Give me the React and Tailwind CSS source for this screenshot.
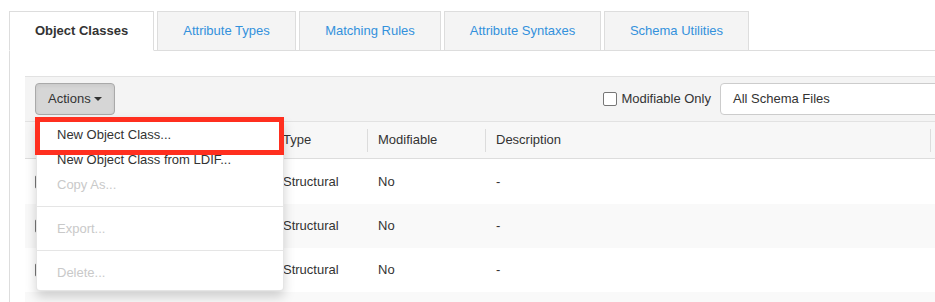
import React from "react";

const tabs = [
  { label: "Object Classes", w: "w-[145px]", active: true },
  { label: "Attribute Types", w: "w-[139px]" },
  { label: "Matching Rules", w: "w-[142px]" },
  { label: "Attribute Syntaxes", w: "w-[157px]" },
  { label: "Schema Utilities", w: "w-[145px]" },
];

const rows = [
  { bg: "bg-white", h: "h-[45px]", show: true },
  { bg: "bg-[#f9f9f9]", h: "h-[44px]", show: true },
  { bg: "bg-white", h: "h-[44px]", show: true },
  { bg: "bg-[#f9f9f9]", h: "h-[44px]", show: false },
];

function Box() {
  return (
    <span className="inline-block w-[14px] h-[14px] border border-[#767676] rounded-[2px] bg-white shrink-0" />
  );
}

function HeadCell({ children }) {
  return (
    <div className="flex items-center h-full">
      <span className="w-px h-[23px] bg-[#dcdcdc] shrink-0" />
      <span className="ml-[10px]">{children}</span>
    </div>
  );
}

export default function App() {
  return (
    <div className="w-[935px] h-[302px] overflow-hidden bg-white font-['Liberation_Sans',Arial,sans-serif] text-[13px] text-[#333]">
      <div className="w-[1000px] pl-[9px] pt-[11px]">
        {/* Tabs */}
        <div className="flex items-start gap-[3px] h-[40px] border-b border-[#dddddd]">
          {tabs.map((t) =>
            t.active ? (
              <div
                key={t.label}
                className={`${t.w} h-[40px] -mb-px flex items-center justify-center bg-white border border-[#dddddd] border-b-white font-bold text-[#333]`}
              >
                {t.label}
              </div>
            ) : (
              <div
                key={t.label}
                className={`${t.w} h-[40px] -mb-px flex items-center justify-center bg-[#f4f4f4] border border-[#dddddd] text-[#3391dc]`}
              >
                {t.label}
              </div>
            )
          )}
        </div>

        {/* Panel */}
        <div className="border-l border-[#dddddd] pl-[15px] pt-[25px] h-[260px]">
          {/* Toolbar */}
          <div className="h-[46px] flex items-center border-t border-b border-[#e2e2e2] bg-[#f4f4f4] pl-[10px]">
            <div className="relative">
              <button className="w-[80px] h-[32px] flex items-center pl-[12px] bg-[#d6d6d6] border border-[#a9a9a9] rounded-[4px] text-[#333] shadow-[inset_0_2px_4px_rgba(0,0,0,0.06)]">
                <span>Actions</span>
                <span className="ml-[3px] w-0 h-0 border-x-[4px] border-x-transparent border-t-[4px] border-t-[#333]" />
              </button>

              {/* Dropdown menu */}
              <div className="absolute left-[1px] top-full mt-[2px] w-[248px] z-10 bg-white rounded-[4px] border border-black/10 shadow-[0_6px_12px_rgba(0,0,0,0.175)] pt-[4px] pb-[5px]">
                <div className="h-[25px] flex items-center pl-[20px] text-[#333]">New Object Class...</div>
                <div className="h-[25px] flex items-center pl-[20px] text-[#333]">New Object Class from LDIF...</div>
                <div className="h-[25px] flex items-center pl-[20px] text-[#c9c9c9]">Copy As...</div>
                <div className="my-[9px] h-px bg-[#e5e5e5]" />
                <div className="h-[25px] flex items-center pl-[20px] text-[#c9c9c9]">Export...</div>
                <div className="my-[9px] h-px bg-[#e5e5e5]" />
                <div className="h-[25px] flex items-center pl-[20px] text-[#c9c9c9]">Delete...</div>
              </div>

              {/* Highlight annotation */}
              <div className="absolute left-0 top-[34px] w-[249px] h-[38px] border-[5px] border-[#ff2f1f] z-20 pointer-events-none" />
            </div>

            <div className="ml-auto flex items-center">
              <label className="flex items-center">
                <Box />
                <span className="ml-[4px]">Modifiable Only</span>
              </label>
              <div className="ml-[9px] mr-[10px] w-[270px] h-[32px] flex items-center pl-[12px] bg-white border border-[#cccccc] rounded-[4px]">
                All Schema Files
              </div>
            </div>
          </div>

          {/* Table header */}
          <div className="grid grid-cols-[247px_95px_118px_445px_1fr] h-[37px] bg-[#f7f7f7] border-b border-[#dddddd]">
            <div className="flex items-center pl-[10px]">
              <Box />
            </div>
            <HeadCell>Type</HeadCell>
            <HeadCell>Modifiable</HeadCell>
            <HeadCell>Description</HeadCell>
            <HeadCell>{""}</HeadCell>
          </div>

          {/* Rows */}
          {rows.map((r, i) => (
            <div
              key={i}
              className={`grid grid-cols-[247px_95px_118px_445px_1fr] ${r.h} ${r.bg}`}
            >
              {r.show ? (
                <>
                  <div className="flex items-center pl-[10px]">
                    <Box />
                  </div>
                  <div className="flex items-center pl-[11px]">Structural</div>
                  <div className="flex items-center pl-[11px]">No</div>
                  <div className="flex items-center pl-[11px]">-</div>
                  <div />
                </>
              ) : null}
            </div>
          ))}
        </div>
      </div>
    </div>
  );
}
